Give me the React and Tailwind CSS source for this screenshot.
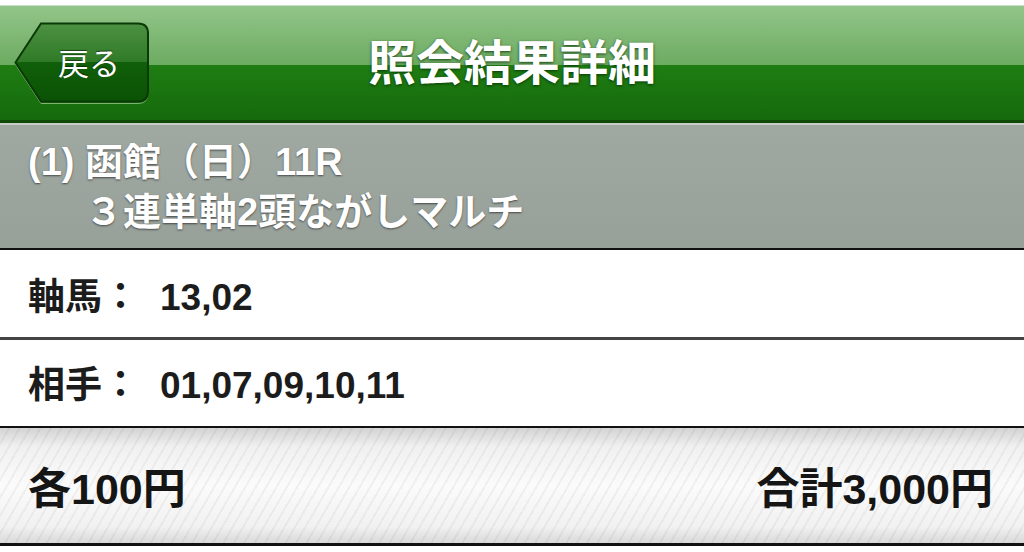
import React from "react";

const FONT = "font-['Liberation_Sans','Noto_Sans_CJK_JP',sans-serif]";

function BackButton() {
  return (
    <button className="relative w-[136px] h-[82px] flex items-center">
      <svg className="absolute inset-0" width="136" height="82" viewBox="0 0 136 82">
        <defs>
          <linearGradient id="backFill" x1="0" y1="0" x2="0" y2="1">
            <stop offset="0%" stopColor="#4c9142" />
            <stop offset="50%" stopColor="#2f7a27" />
            <stop offset="50%" stopColor="#115f0a" />
            <stop offset="100%" stopColor="#0a5205" />
          </linearGradient>
        </defs>
        <path
          d="M27 2.5 L124 2.5 Q134 2.5 134 12.5 L134 70.5 Q134 80.5 124 80.5 L27 80.5 L1.5 41.5 Z"
          fill="none"
          stroke="#7fb374"
          strokeWidth="1"
          transform="translate(0 1)"
        />
        <path
          d="M27 1.5 L124 1.5 Q134 1.5 134 11.5 L134 69.5 Q134 79.5 124 79.5 L27 79.5 L1.5 40.5 Z"
          fill="url(#backFill)"
          stroke="#0a3a05"
          strokeWidth="2"
        />
      </svg>
      <span className="relative pl-[44px] pt-[2px] text-[31px] leading-none text-white font-normal [text-shadow:0_-1px_1px_rgba(0,0,0,0.5)]">
        戻る
      </span>
    </button>
  );
}

export default function App() {
  return (
    <div className={`w-[1024px] h-[552px] bg-white flex flex-col ${FONT}`}>
      <div className="h-[5px] bg-white" />

      {/* navigation bar */}
      <header className="h-[118px] border-t border-[#c9dcc5] border-b-[3px] border-b-[#0f4a09] bg-[linear-gradient(to_bottom,#92c589_0%,#6dab61_52%,#1f7d13_52%,#156a0b_100%)] grid grid-cols-[1fr_auto_1fr] items-center">
        <div className="pl-[14px] flex items-center">
          <BackButton />
        </div>
        <h1 className="pt-[2px] text-[48px] leading-none font-bold text-white [text-shadow:0_1px_3px_rgba(0,40,0,0.8)]">
          照会結果詳細
        </h1>
        <div />
      </header>

      {/* race summary */}
      <section className="h-[127px] border-t-[2px] border-[#c8cdc9] border-b-[2px] border-b-[#111] bg-[linear-gradient(to_bottom,#a0a8a2,#98a09a)] flex flex-col justify-center pl-[28px] text-white font-bold text-[38px] leading-[50px] [text-shadow:0_1px_2px_rgba(0,0,0,0.55)]">
        <div className="flex">
          <span>(1)&nbsp;</span>
          <span>函館（日）11R</span>
        </div>
        <div className="pl-[57px]">３連単軸2頭ながしマルチ</div>
      </section>

      {/* selections */}
      <div className="h-[90px] pt-[8px] bg-white flex items-center gap-[21px] pl-[28px] text-[37px] font-bold text-[#1c1c1c] border-b-[3px] border-[#444]">
        <span>軸馬：</span>
        <span>13,02</span>
      </div>
      <div className="h-[88px] pt-[6px] bg-white flex items-center gap-[21px] pl-[28px] text-[37px] font-bold text-[#1c1c1c] border-b-[2px] border-[#111]">
        <span>相手：</span>
        <span>01,07,09,10,11</span>
      </div>

      {/* amount footer */}
      <footer className="h-[118px] pt-[8px] border-b-[3px] border-[#111] flex items-center justify-between pl-[28px] pr-[31px] text-[43px] font-bold text-[#151515] [background-image:repeating-linear-gradient(120deg,rgba(0,0,0,0)_0px,rgba(0,0,0,0)_7px,rgba(0,0,0,0.045)_7px,rgba(0,0,0,0.045)_9px),linear-gradient(to_bottom,#d3d3d3,#f0f0f0_16%,#fbfbfb_50%,#f1f1f1_86%,#d9d9d9)]">
        <span>各100円</span>
        <span>合計3,000円</span>
      </footer>

      <div className="flex-1 bg-white" />
    </div>
  );
}
